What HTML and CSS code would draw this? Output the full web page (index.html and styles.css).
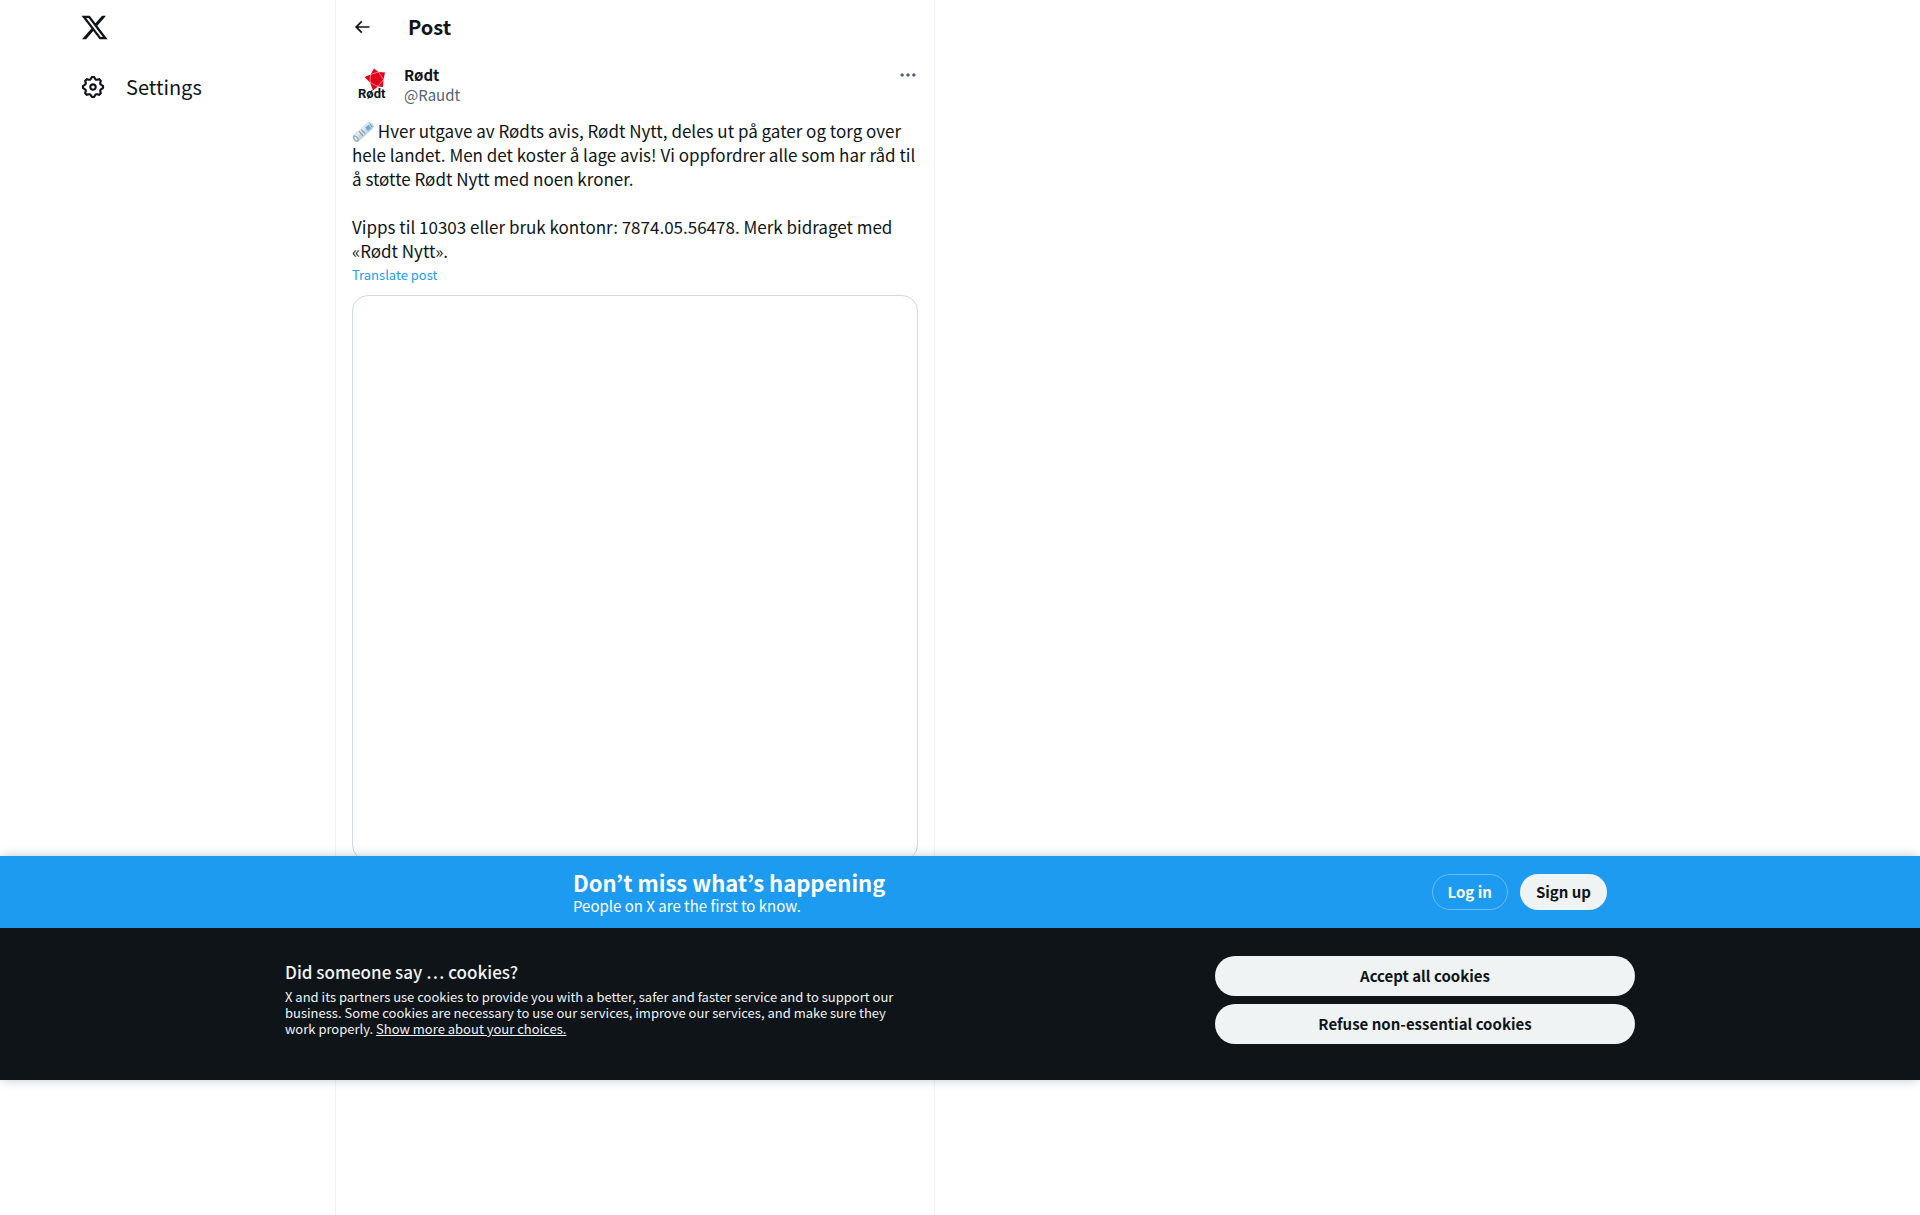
FILE: index.html
```html
<!DOCTYPE html>
<html lang="en">
<head>
  <meta charset="UTF-8" />
  <title>Rødt on X</title>
  <link rel="stylesheet" href="styles.css">
</head>
<body>
  <div class="page">
    <header class="sidebar">
      <a class="logo" href="#" aria-label="X">
        <svg viewBox="0 0 24 24"><path d="M18.244 2.25h3.308l-7.227 8.26 8.502 11.24H16.17l-5.214-6.817L4.99 21.75H1.68l7.73-8.835L1.254 2.25H8.08l4.713 6.231zm-1.161 17.52h1.833L7.084 4.126H5.117z"/></svg>
      </a>
      <nav>
        <a class="nav-link" href="#">
          <svg viewBox="0 0 24 24"><path d="M10.54 1.75h2.92l1.57 2.36c.11.17.32.25.53.21l2.53-.59 2.17 2.17-.58 2.54c-.05.2.04.41.21.53l2.36 1.57v2.92l-2.36 1.57c-.17.12-.26.33-.21.53l.58 2.54-2.17 2.17-2.53-.59c-.21-.04-.42.04-.53.21l-1.57 2.36h-2.92l-1.58-2.36c-.11-.17-.32-.25-.52-.21l-2.54.59-2.17-2.17.58-2.54c.05-.2-.03-.41-.21-.53l-2.35-1.57v-2.92L4.1 8.97c.18-.12.26-.33.21-.53L3.73 5.9 5.9 3.73l2.54.59c.2.04.41-.04.52-.21l1.58-2.36zm1.07 2l-.98 1.47C10.05 6.08 9 6.5 7.99 6.27l-1.46-.34-.6.6.33 1.46c.24 1.01-.18 2.07-1.05 2.64l-1.46.98v.78l1.46.98c.87.57 1.29 1.63 1.05 2.64l-.33 1.46.6.6 1.46-.34c1.01-.23 2.06.19 2.64 1.05l.98 1.47h.78l.97-1.47c.58-.86 1.63-1.28 2.65-1.05l1.45.34.61-.6-.34-1.46c-.23-1.01.18-2.07 1.05-2.64l1.47-.98v-.78l-1.47-.98c-.87-.57-1.28-1.63-1.05-2.64l.34-1.46-.61-.6-1.45.34c-1.02.23-2.07-.19-2.65-1.05l-.97-1.47h-.78zM12 10.5c-.83 0-1.5.67-1.5 1.5s.67 1.5 1.5 1.5 1.5-.67 1.5-1.5-.67-1.5-1.5-1.5zM8.5 12c0-1.93 1.56-3.5 3.5-3.5 1.93 0 3.5 1.57 3.5 3.5s-1.57 3.5-3.5 3.5c-1.94 0-3.5-1.57-3.5-3.5z"/></svg>
          <span>Settings</span>
        </a>
      </nav>
    </header>

    <main class="timeline">
      <div class="topbar">
        <button class="icon-button" type="button" aria-label="Back">
          <svg viewBox="0 0 24 24"><path d="M7.414 13l5.043 5.04-1.414 1.42L3.586 12l7.457-7.46 1.414 1.42L7.414 11H21v2H7.414z"/></svg>
        </button>
        <h1>Post</h1>
      </div>

      <article class="post">
        <div class="author">
          <svg class="avatar" viewBox="0 0 40 40">
            <path class="star" d="M22 3.500L26.500 7L33 7.500L31.500 14.500L31 22L26 21.500L21 25.500L18 17.500L12.500 12L18.500 9.500z"/>
            <path class="star-lines" d="M18.500 9.500L26.500 7L31.500 14.500L26 21.500L18 17.500z"/>
            <text x="6" y="33">Rødt</text>
          </svg>
          <div class="names">
            <a class="name" href="#">Rødt</a>
            <a class="handle" href="#">@Raudt</a>
          </div>
          <button class="icon-button more" type="button" aria-label="More">
            <svg viewBox="0 0 24 24"><path d="M3 12c0-1.100.9-2 2-2s2 .9 2 2-.9 2-2 2-2-.9-2-2zm9 2c1.100 0 2-.9 2-2s-.9-2-2-2-2 .9-2 2 .9 2 2 2zm7 0c1.100 0 2-.9 2-2s-.9-2-2-2-2 .9-2 2 .9 2 2 2z"/></svg>
          </button>
        </div>

        <div class="text">
          <p><svg class="emoji" viewBox="0 0 20 20" role="img" aria-label="Rolled-up newspaper"><path fill="#ccd6dd" d="M1 13L14 1.500Q17 0 19 2.500T19 7L6.500 18.500Q4 20 1.800 17.500T1 13z"/><path fill="#e1e8ed" d="M2 12.500L14.500 1.500L17 3L5 14z"/><ellipse cx="3.600" cy="16" rx="2" ry="3.200" fill="#99aab5" transform="rotate(-38 3.600 16)"/><ellipse cx="3.600" cy="16" rx="1" ry="2" fill="#e1e8ed" transform="rotate(-38 3.600 16)"/><path fill="#55acee" d="M12 6L15 3.500L17.500 6.500L14.500 9z"/><path fill="none" stroke="#8899a6" d="M6.500 9.500L10 13.500M8.500 7.800L12 11.500M16 2.500L18.500 5.500"/></svg> Hver utgave av Rødts avis, Rødt Nytt, deles ut på gater og torg over hele landet. Men det koster å lage avis! Vi oppfordrer alle som har råd til å støtte Rødt Nytt med noen kroner.</p>
          <p>Vipps til 10303 eller bruk kontonr: 7874.05.56478. Merk bidraget med «Rødt Nytt».</p>
        </div>
        <button class="translate" type="button">Translate post</button>
        <div class="media"></div>
      </article>
    </main>
  </div>

  <div class="banners">
    <section class="signup-bar">
      <div class="signup-inner">
        <div class="signup-text">
          <h2>Don’t miss what’s happening</h2>
          <p>People on X are the first to know.</p>
        </div>
        <a class="pill outline" href="#">Log in</a>
        <a class="pill" href="#">Sign up</a>
      </div>
    </section>

    <section class="cookie-bar">
      <div class="cookie-inner">
        <div class="cookie-text">
          <h2>Did someone say … cookies?</h2>
          <p>X and its partners use cookies to provide you with a better, safer and faster service and to support our business. Some cookies are necessary to use our services, improve our services, and make sure they work properly. <a href="#">Show more about your choices.</a></p>
        </div>
        <div class="cookie-buttons">
          <button class="pill large" type="button">Accept all cookies</button>
          <button class="pill large" type="button">Refuse non-essential cookies</button>
        </div>
      </div>
    </section>
  </div>
</body>
</html>
```

FILE: styles.css
```css
* {
  box-sizing: border-box;
}

body {
  margin: 0;
  background: #fff;
  color: #0f1419;
  font-family: "Noto Sans CJK JP", "Open Sans", sans-serif;
  font-size: 15px;
  line-height: 20px;
}

h1,
h2,
p {
  margin: 0;
}

a {
  color: inherit;
  text-decoration: none;
}

button {
  font: inherit;
  color: inherit;
  border: 0;
  padding: 0;
  background: none;
  cursor: pointer;
}

svg {
  display: block;
  fill: currentColor;
}

.page {
  display: grid;
  grid-template-columns: 275px 600px 1fr;
  min-height: 100vh;
  padding-left: 60px;
}

/* Sidebar */
.sidebar {
  padding: 0 20px;
}

.logo {
  display: flex;
  align-items: center;
  height: 55px;
}

.logo svg {
  width: 29px;
  height: 29px;
}

.nav-link {
  display: flex;
  align-items: center;
  gap: 20px;
  height: 64px;
  font-size: 20px;
  line-height: 24px;
}

.nav-link svg {
  width: 26px;
  height: 26px;
}

/* Post column */
.timeline {
  border-left: 1px solid #eff3f4;
  border-right: 1px solid #eff3f4;
}

.topbar {
  display: flex;
  align-items: center;
  gap: 36px;
  height: 53px;
  padding: 0 16px;
}

.topbar h1 {
  font-size: 20px;
  line-height: 24px;
}

.icon-button svg {
  width: 20px;
  height: 20px;
}

.post {
  padding: 12px 16px;
}

.author {
  display: flex;
  align-items: flex-start;
  gap: 12px;
}

.avatar {
  width: 40px;
  height: 40px;
}

.avatar text {
  font-family: Roboto, sans-serif;
  font-size: 13px;
  font-weight: 700;
}

.star {
  fill: #e2001a;
}

.star-lines {
  fill: none;
  stroke: #fff;
  stroke-width: 0.5;
}

.names {
  display: flex;
  flex-direction: column;
  flex: 1;
}

.name {
  font-weight: 700;
}

.handle,
.more {
  color: #536471;
}

.text {
  display: flex;
  flex-direction: column;
  gap: 24px;
  margin-top: 14px;
  font-size: 17px;
  line-height: 24px;
}

.emoji {
  display: inline-block;
  width: 22px;
  height: 22px;
  vertical-align: -5px;
}

.translate {
  display: block;
  margin: 4px 0 12px;
  color: #1d9bf0;
  font-size: 13px;
  line-height: 16px;
}

.media {
  aspect-ratio: 1;
  border: 1px solid #cfd9de;
  border-radius: 16px;
}

/* Banners over the page */
.banners {
  position: fixed;
  left: 0;
  right: 0;
  bottom: 135px;
  box-shadow: 0 0 10px rgba(101, 119, 134, 0.4);
}

.signup-bar {
  background: #1d9bf0;
  color: #fff;
}

.signup-inner {
  display: flex;
  align-items: center;
  gap: 12px;
  max-width: 1294px;
  height: 72px;
  margin: 0 auto;
  padding-left: 260px;
}

.signup-text {
  flex: 1;
}

.signup-text h2 {
  font-size: 22px;
  line-height: 28px;
}

.pill {
  height: 36px;
  padding: 8px 16px;
  border-radius: 20px;
  background: #eff3f4;
  color: #0f1419;
  font-weight: 700;
}

.pill.outline {
  border: 1px solid #6bbdf5;
  padding: 7px 15px;
  background: none;
  color: #fff;
}

.pill.large {
  height: 40px;
}

.cookie-bar {
  background: #0f1419;
  color: #eff3f4;
}

.cookie-inner {
  display: flex;
  justify-content: space-between;
  max-width: 1350px;
  margin: 0 auto;
  padding: 28px 0 36px;
}

.cookie-text {
  max-width: 624px;
  padding-top: 4px;
}

.cookie-text h2 {
  margin-bottom: 5px;
  font-size: 17px;
  font-weight: 500;
  line-height: 24px;
}

.cookie-text p {
  font-size: 13px;
  line-height: 16px;
}

.cookie-text a {
  text-decoration: underline;
}

.cookie-buttons {
  display: flex;
  flex-direction: column;
  gap: 8px;
  width: 420px;
}
```
